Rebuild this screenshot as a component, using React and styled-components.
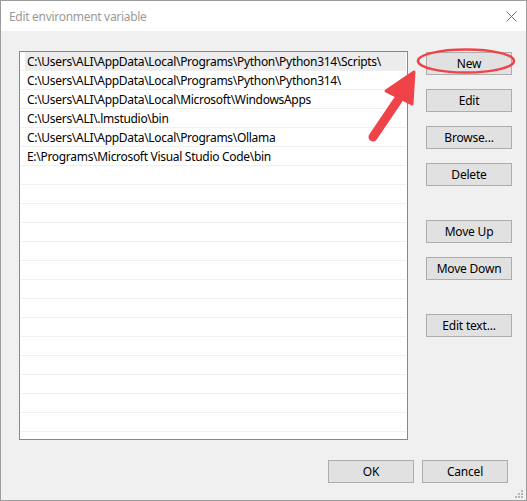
import React from 'react'
import styled, { createGlobalStyle } from 'styled-components'

const GlobalStyle = createGlobalStyle`
  html, body {
    margin: 0;
    padding: 0;
    background: #f0f0f0;
  }
  body {
    font-family: "Noto Sans", "Liberation Sans", sans-serif;
    font-size: 12px;
    letter-spacing: -0.3px;
    color: #000;
  }
`

const paths = [
  'C:\\Users\\ALI\\AppData\\Local\\Programs\\Python\\Python314\\Scripts\\',
  'C:\\Users\\ALI\\AppData\\Local\\Programs\\Python\\Python314\\',
  'C:\\Users\\ALI\\AppData\\Local\\Microsoft\\WindowsApps',
  'C:\\Users\\ALI\\.lmstudio\\bin',
  'C:\\Users\\ALI\\AppData\\Local\\Programs\\Ollama',
  'E:\\Programs\\Microsoft Visual Studio Code\\bin',
]

const sideButtons = [
  { label: 'New' },
  { label: 'Edit' },
  { label: 'Browse...' },
  { label: 'Delete' },
  { label: 'Move Up', gapBefore: true },
  { label: 'Move Down' },
  { label: 'Edit text...', gapBefore: true },
]

const Window = styled.div`
  position: relative;
  width: 527px;
  height: 501px;
  box-sizing: border-box;
  border: 1px solid #9c9c9c;
  display: flex;
  flex-direction: column;
  overflow: hidden;
`

const TitleBar = styled.div`
  height: 30px;
  background: #fff;
  display: flex;
  align-items: center;
  justify-content: space-between;
  padding: 0 9px 0 8px;
`

const Title = styled.span`
  color: #9a9a9a;
  font-size: 12px;
`

const Body = styled.div`
  flex: 1;
  background: #f0f0f0;
  padding: 20px 14px 0 18px;
  display: flex;
  flex-direction: column;
`

const Main = styled.div`
  display: flex;
  gap: 18px;
`

const ListBox = styled.div`
  flex-shrink: 0;
  width: 389px;
  height: 389px;
  box-sizing: border-box;
  border: 1px solid #828790;
  background: #fff;
  overflow: hidden;
`

const Row = styled.div`
  height: 18px;
  margin: 0 1px;
  border-bottom: 1px solid #f0f0f0;
  display: flex;
  align-items: center;
  padding-left: 6px;
  white-space: nowrap;
  background: ${p => (p.$selected ? 'linear-gradient(to right, #fff 4px, #ececec 4px)' : '#fff')};
`

const ButtonColumn = styled.div`
  display: flex;
  flex-direction: column;
  padding-top: 1px;
`

const Button = styled.button`
  flex-shrink: 0;
  width: 86px;
  height: 23px;
  box-sizing: border-box;
  border: 1px solid #adadad;
  background: #e1e1e1;
  font-family: inherit;
  font-size: 12px;
  letter-spacing: -0.2px;
  color: #000;
  padding: 0;
  margin-top: ${p => (p.$first ? '0' : p.$gapBefore ? '34px' : '14px')};
`

const Footer = styled.div`
  display: flex;
  justify-content: flex-end;
  gap: 8px;
  margin-top: 20px;
  padding-right: 4px;
`

const Overlay = styled.svg`
  position: absolute;
  left: -1px;
  top: -1px;
  pointer-events: none;
`

const Grip = styled.svg`
  position: absolute;
  right: 3px;
  bottom: 2px;
`

export default function App() {
  const rows = Array.from({ length: 21 }, (_, i) => paths[i] || '')
  return (
    <>
      <GlobalStyle />
      <Window>
        <TitleBar>
          <Title>Edit environment variable</Title>
          <svg width="11" height="11" viewBox="0 0 11 11">
            <path d="M0.5 0.5 L10.5 10.5 M10.5 0.5 L0.5 10.5" stroke="#6f6f6f" strokeWidth="1" />
          </svg>
        </TitleBar>
        <Body>
          <Main>
            <ListBox>
              {rows.map((p, i) => (
                <Row key={i} $selected={i === 0}>{p}</Row>
              ))}
            </ListBox>
            <ButtonColumn>
              {sideButtons.map((b, i) => (
                <Button key={b.label} $first={i === 0} $gapBefore={b.gapBefore}>{b.label}</Button>
              ))}
            </ButtonColumn>
          </Main>
          <Footer>
            <Button $first>OK</Button>
            <Button $first>Cancel</Button>
          </Footer>
        </Body>
        <Overlay width="527" height="501" viewBox="0 0 527 501">
          <ellipse cx="466" cy="61" rx="48" ry="11.5" fill="none" stroke="#ef4349" strokeWidth="2.5" />
          <line x1="373" y1="137" x2="398" y2="100" stroke="#ef4349" strokeWidth="9" strokeLinecap="round" />
          <polygon points="414,72 386,91 412,104" fill="#ef4349" stroke="#ef4349" strokeWidth="3" strokeLinejoin="round" />
        </Overlay>
        <Grip width="8" height="8" viewBox="0 0 8 8">
          <g fill="#b5b5b5">
            <rect x="6" y="0" width="2" height="2" />
            <rect x="3" y="3" width="2" height="2" />
            <rect x="6" y="3" width="2" height="2" />
            <rect x="0" y="6" width="2" height="2" />
            <rect x="3" y="6" width="2" height="2" />
            <rect x="6" y="6" width="2" height="2" />
          </g>
        </Grip>
      </Window>
    </>
  )
}
